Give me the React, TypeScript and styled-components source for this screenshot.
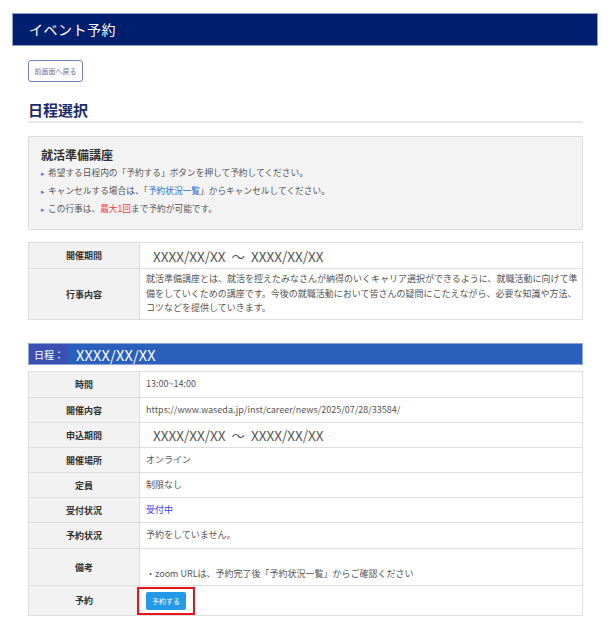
import React from 'react';
import styled, { createGlobalStyle } from 'styled-components';

const GlobalStyle = createGlobalStyle`
  html, body {
    margin: 0;
    padding: 0;
    background: #fff;
  }
  body {
    font-family: 'Noto Sans CJK JP', 'Noto Sans', sans-serif;
    color: #444;
  }
`;

interface valueProps {
  big?: boolean;
  color?: string;
}

interface rowProps {
  h: number;
}

const Page = styled.div`
  width: 586px;
  margin: 13px 0 0 12px;
`;

const Header = styled.div`
  height: 33px;
  background-color: #00206f;
  border: 1px solid #8f9fcc;
  box-sizing: border-box;
  padding-left: 16px;
  color: #fff;
  font-size: 14px;
  line-height: 31px;
  letter-spacing: 0.5px;
`;

const Body = styled.div`
  padding: 14px 15px 0 16px;
`;

const BackButton = styled.button`
  display: block;
  width: 55px;
  height: 22px;
  padding: 0;
  background: #fff;
  border: 1.5px solid #6f80b8;
  border-radius: 3px;
  font-family: inherit;
  font-size: 7px;
  color: #6a7099;
  cursor: pointer;
`;

const Heading = styled.h2`
  margin: 18px 0 0;
  padding-bottom: 1px;
  font-size: 15px;
  line-height: 20px;
  font-weight: 700;
  color: #1b2c6b;
  border-bottom: 2px solid #e8e8e8;
`;

const InfoBox = styled.div`
  margin-top: 13px;
  height: 94px;
  box-sizing: border-box;
  background: #f3f3f3;
  border: 1px solid #dcdcdc;
  border-radius: 2px;
  padding: 10px 12px 0 12px;
`;

const InfoTitle = styled.div`
  font-size: 12px;
  font-weight: 700;
  color: #333;
  line-height: 16px;
  margin-bottom: 1px;
`;

const InfoList = styled.ul`
  list-style: none;
  margin: 0;
  padding: 0;
  li {
    font-size: 8.7px;
    line-height: 18px;
    color: #555;
    display: flex;
    align-items: center;
  }
  li::before {
    content: '▸';
    color: #6a6ad8;
    font-size: 7px;
    width: 6px;
    margin-right: 1px;
  }
`;

const Blue = styled.span`
  color: #2a6fd6;
`;

const Red = styled.span`
  color: #f23a3a;
`;

const Table = styled.table<{ mt?: number }>`
  width: 100%;
  border-collapse: collapse;
  margin-top: ${(props) => props.mt ?? 12}px;
  border: 1.5px solid #dedede;
`;

const Row = styled.tr<rowProps>`
  height: ${(props) => props.h}px;
`;

const Th = styled.th`
  width: 110px;
  background: #f2f2f2;
  border: 1.5px solid #dedede;
  font-size: 9px;
  font-weight: 700;
  color: #333;
  text-align: center;
  vertical-align: middle;
  padding: 0;
`;

const Td = styled.td<valueProps>`
  border: 1.5px solid #dedede;
  padding: 0 4px 0 ${(props) => (props.big ? 13 : 6)}px;
  font-size: ${(props) => (props.big ? '13.5px' : '9px')};
  color: ${(props) => (props.color ? props.color : '#555')};
  line-height: ${(props) => (props.big ? '20px' : '14.5px')};
  vertical-align: middle;
  white-space: ${(props) => (props.big ? 'pre' : 'nowrap')};
`;

const NoteCell = styled(Td)`
  vertical-align: bottom;
  padding-bottom: 4px;
`;

const ScheduleBar = styled.div`
  margin-top: 23px;
  height: 22px;
  display: flex;
  align-items: center;
  background: #2a5fbb;
  border: 1px solid #8ea6dc;
  box-sizing: border-box;
  color: #fff;
`;

const ScheduleLabel = styled.span`
  display: flex;
  align-items: center;
  height: 100%;
  padding: 0 4px 0 5px;
  background: #3c4fb3;
  font-size: 10px;
`;

const ScheduleDate = styled.span`
  margin-left: 8px;
  font-size: 14.5px;
  letter-spacing: 0.2px;
`;

const ReserveWrap = styled.span`
  display: inline-flex;
  padding: 3px 7px;
  border: 2px solid #e8131b;
  margin-left: -9px;
`;

const ReserveButton = styled.button`
  width: 40px;
  height: 18px;
  padding: 0;
  border: none;
  border-radius: 2px;
  background: #2399e8;
  color: #fff;
  font-family: inherit;
  font-size: 7px;
  cursor: pointer;
`;

const period = 'XXXX/XX/XX  ～  XXXX/XX/XX';

function App() {
  return (
    <>
      <GlobalStyle />
      <Page>
        <Header>イベント予約</Header>
        <Body>
          <BackButton>前画面へ戻る</BackButton>
          <Heading>日程選択</Heading>
          <InfoBox>
            <InfoTitle>就活準備講座</InfoTitle>
            <InfoList>
              <li>希望する日程内の「予約する」ボタンを押して予約してください。</li>
              <li>
                キャンセルする場合は、「<Blue>予約状況一覧</Blue>」からキャンセルしてください。
              </li>
              <li>
                この行事は、<Red>最大1回</Red>まで予約が可能です。
              </li>
            </InfoList>
          </InfoBox>

          <Table>
            <tbody>
              <Row h={26}>
                <Th>開催期間</Th>
                <Td big>{period}</Td>
              </Row>
              <Row h={51}>
                <Th>行事内容</Th>
                <Td>
                  就活準備講座とは、就活を控えたみなさんが納得のいくキャリア選択ができるように、就職活動に向けて準
                  <br />
                  備をしていくための講座です。今後の就職活動において皆さんの疑問にこたえながら、必要な知識や方法、
                  <br />
                  コツなどを提供していきます。
                </Td>
              </Row>
            </tbody>
          </Table>

          <ScheduleBar>
            <ScheduleLabel>日程：</ScheduleLabel>
            <ScheduleDate>XXXX/XX/XX</ScheduleDate>
          </ScheduleBar>

          <Table mt={6}>
            <tbody>
              <Row h={26}>
                <Th>時間</Th>
                <Td>13:00~14:00</Td>
              </Row>
              <Row h={25}>
                <Th>開催内容</Th>
                <Td>https://www.waseda.jp/inst/career/news/2025/07/28/33584/</Td>
              </Row>
              <Row h={25}>
                <Th>申込期間</Th>
                <Td big>{period}</Td>
              </Row>
              <Row h={25}>
                <Th>開催場所</Th>
                <Td>オンライン</Td>
              </Row>
              <Row h={25}>
                <Th>定員</Th>
                <Td>制限なし</Td>
              </Row>
              <Row h={25}>
                <Th>受付状況</Th>
                <Td color="#3b3bf0">受付中</Td>
              </Row>
              <Row h={26}>
                <Th>予約状況</Th>
                <Td>予約をしていません。</Td>
              </Row>
              <Row h={37}>
                <Th>備考</Th>
                <NoteCell>・zoom URLは、予約完了後「予約状況一覧」からご確認ください</NoteCell>
              </Row>
              <Row h={30}>
                <Th>予約</Th>
                <Td>
                  <ReserveWrap>
                    <ReserveButton>予約する</ReserveButton>
                  </ReserveWrap>
                </Td>
              </Row>
            </tbody>
          </Table>
        </Body>
      </Page>
    </>
  );
}

export default App;
